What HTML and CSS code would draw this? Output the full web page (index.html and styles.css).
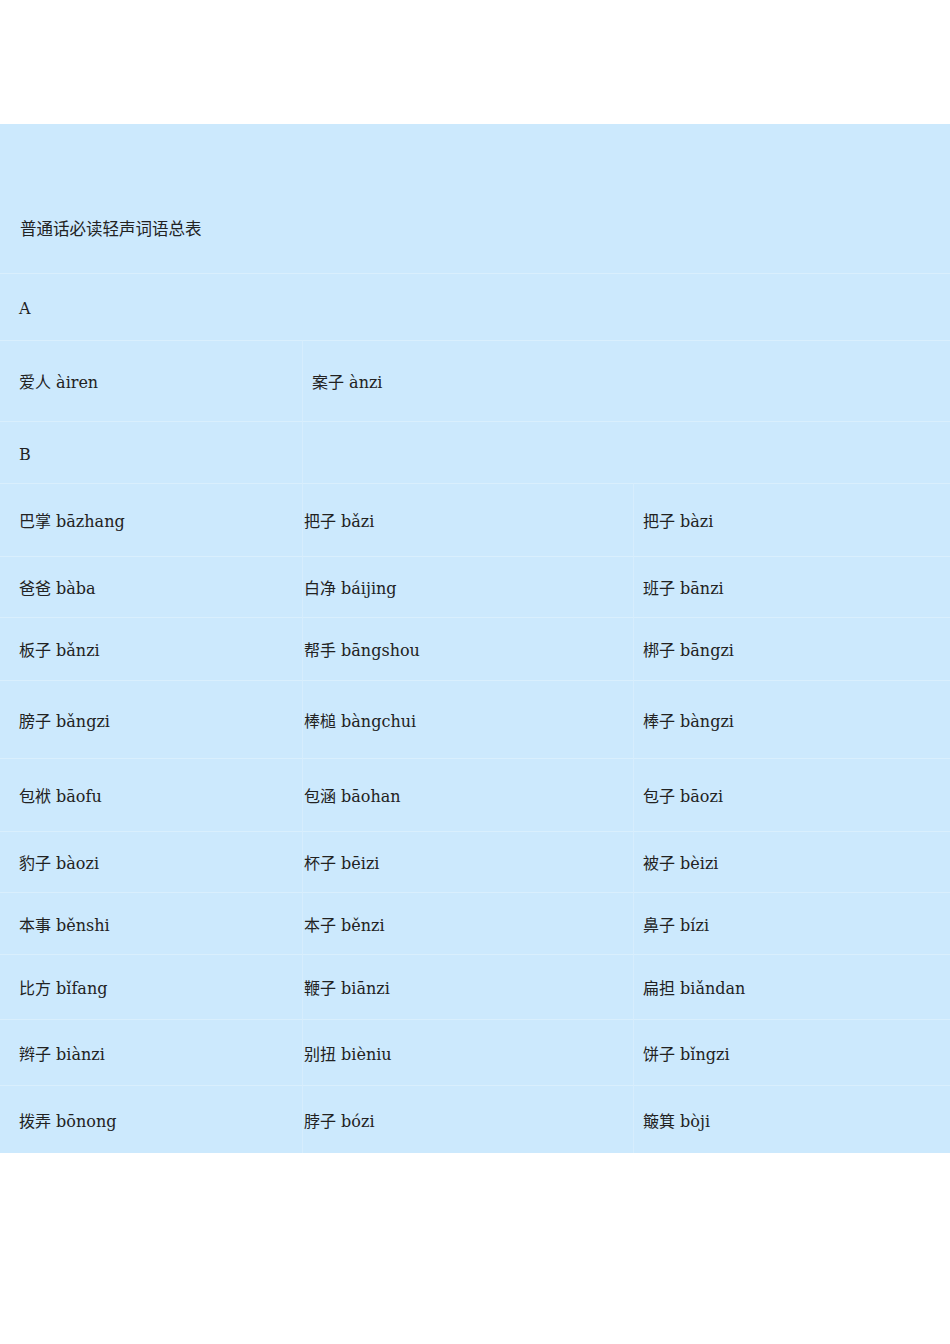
FILE: index.html
```html
<!DOCTYPE html>
<html lang="zh-CN">
<head>
<meta charset="utf-8">
<title>普通话必读轻声词语总表</title>
<link rel="stylesheet" href="styles.css">
</head>
<body>
<main class="sheet">
  <div class="cell span3 title">普通话必读轻声词语总表</div>
  <div class="cell span3">A</div>
  <div class="cell">爱人 àiren</div>
  <div class="cell span2 divl wide">案子 ànzi</div>
  <div class="cell">B</div>
  <div class="cell span2 divl"></div>

  <div class="cell">巴掌 bāzhang</div>
  <div class="cell divl c2">把子 bǎzi</div>
  <div class="cell divl c3">把子 bàzi</div>

  <div class="cell">爸爸 bàba</div>
  <div class="cell divl c2">白净 báijing</div>
  <div class="cell divl c3">班子 bānzi</div>

  <div class="cell">板子 bǎnzi</div>
  <div class="cell divl c2">帮手 bāngshou</div>
  <div class="cell divl c3">梆子 bāngzi</div>

  <div class="cell">膀子 bǎngzi</div>
  <div class="cell divl c2">棒槌 bàngchui</div>
  <div class="cell divl c3">棒子 bàngzi</div>

  <div class="cell">包袱 bāofu</div>
  <div class="cell divl c2">包涵 bāohan</div>
  <div class="cell divl c3">包子 bāozi</div>

  <div class="cell">豹子 bàozi</div>
  <div class="cell divl c2">杯子 bēizi</div>
  <div class="cell divl c3">被子 bèizi</div>

  <div class="cell">本事 běnshi</div>
  <div class="cell divl c2">本子 běnzi</div>
  <div class="cell divl c3">鼻子 bízi</div>

  <div class="cell">比方 bǐfang</div>
  <div class="cell divl c2">鞭子 biānzi</div>
  <div class="cell divl c3">扁担 biǎndan</div>

  <div class="cell">辫子 biànzi</div>
  <div class="cell divl c2">别扭 bièniu</div>
  <div class="cell divl c3">饼子 bǐngzi</div>

  <div class="cell">拨弄 bōnong</div>
  <div class="cell divl c2">脖子 bózi</div>
  <div class="cell divl c3">簸箕 bòji</div>
</main>
</body>
</html>
```

FILE: styles.css
```css
html, body {
  margin: 0;
  padding: 0;
  background: #ffffff;
}

body {
  font-family: "DejaVu Serif", "Noto Sans CJK SC", serif;
  font-size: 16px;
  color: #222222;
}

.sheet {
  margin-top: 124px;
  width: 950px;
  background: #cce9fd;
  display: grid;
  grid-template-columns: 302px 331px 317px;
  grid-template-rows: 149px 67px 81px 62px 73px 61px 63px 78px 73px 61px 62px 65px 66px 68px;
}

.cell {
  box-sizing: border-box;
  display: flex;
  align-items: center;
  padding-left: 19px;
  padding-top: 4px;
  border-top: 1px solid #d9effd;
  white-space: nowrap;
  line-height: 22px;
}

.sheet > .cell:first-child {
  border-top: none;
}

.span3 { grid-column: span 3; }
.span2 { grid-column: span 2; }

.divl { border-left: 1px solid #d6edfd; }

.title {
  align-items: flex-end;
  padding-top: 0;
  padding-bottom: 32px;
  font-size: 16.5px;
  padding-left: 20px;
}

.wide { padding-left: 9px; }
.c2 { padding-left: 1px; }
.c3 { padding-left: 9px; }
```
